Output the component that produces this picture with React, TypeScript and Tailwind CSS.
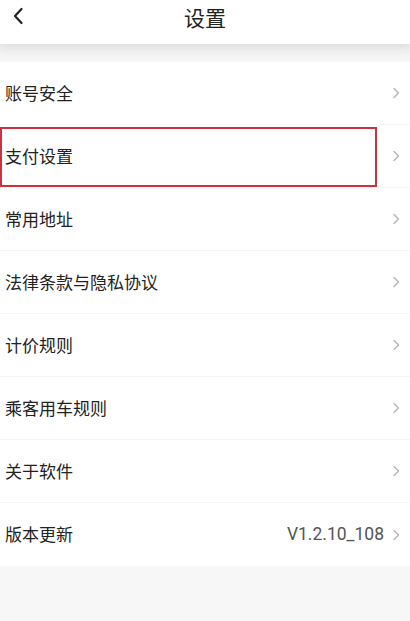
const rows: { label: string; value?: string; boxed?: boolean }[] = [
  { label: '账号安全' },
  { label: '支付设置', boxed: true },
  { label: '常用地址' },
  { label: '法律条款与隐私协议' },
  { label: '计价规则' },
  { label: '乘客用车规则' },
  { label: '关于软件' },
  { label: '版本更新', value: 'V1.2.10_108' },
]

function Chevron() {
  return (
    <svg width="8" height="12" viewBox="0 0 8 12" fill="none" className="shrink-0">
      <path d="M2 1.5 L6.5 6 L2 10.5" stroke="#b5b5b5" strokeWidth="1.4" strokeLinecap="round" strokeLinejoin="round" />
    </svg>
  )
}

export default function App() {
  return (
    <div
      className="w-[410px] h-[621px] bg-[#f7f7f7] flex flex-col overflow-hidden"
      style={{ fontFamily: '"Noto Sans CJK SC", "Noto Sans", sans-serif' }}
    >
      {/* Header */}
      <div className="relative h-[44px] bg-white flex items-start justify-center pt-[2px] shadow-[0_2px_10px_rgba(0,0,0,0.08)] z-10">
        <svg width="12" height="18" viewBox="0 0 12 18" fill="none" className="absolute left-[12px] top-[7px]">
          <path d="M9.5 2 L3 9 L9.5 16" stroke="#222" strokeWidth="2.2" strokeLinecap="round" strokeLinejoin="round" />
        </svg>
        <h1 className="text-[21px] leading-[30px] text-[#222] font-normal">设置</h1>
      </div>

      <div className="h-[18px] bg-gradient-to-b from-[#ececec] to-[#f7f7f7]" />

      {/* List */}
      <div className="bg-white flex flex-col">
        {rows.map((row, i) => (
          <div
            key={row.label}
            className={`relative h-[63px] flex items-center pl-[5px] pr-[10px] ${
              i < rows.length - 1 ? 'border-b border-[#f5f5f5]' : ''
            }`}
          >
            {row.boxed && (
              <div className="absolute left-0 top-[2px] w-[377px] h-[60px] border-2 border-[#c9333d]" />
            )}
            <span className="flex-1 text-[17px] text-[#222] -mt-[1px]">{row.label}</span>
            {row.value && (
              <span
                className="mr-[8px] text-[17.5px] text-[#555]"
                style={{ fontFamily: 'Roboto, "Liberation Sans", sans-serif' }}
              >
                {row.value}
              </span>
            )}
            <Chevron />
          </div>
        ))}
      </div>
    </div>
  )
}
